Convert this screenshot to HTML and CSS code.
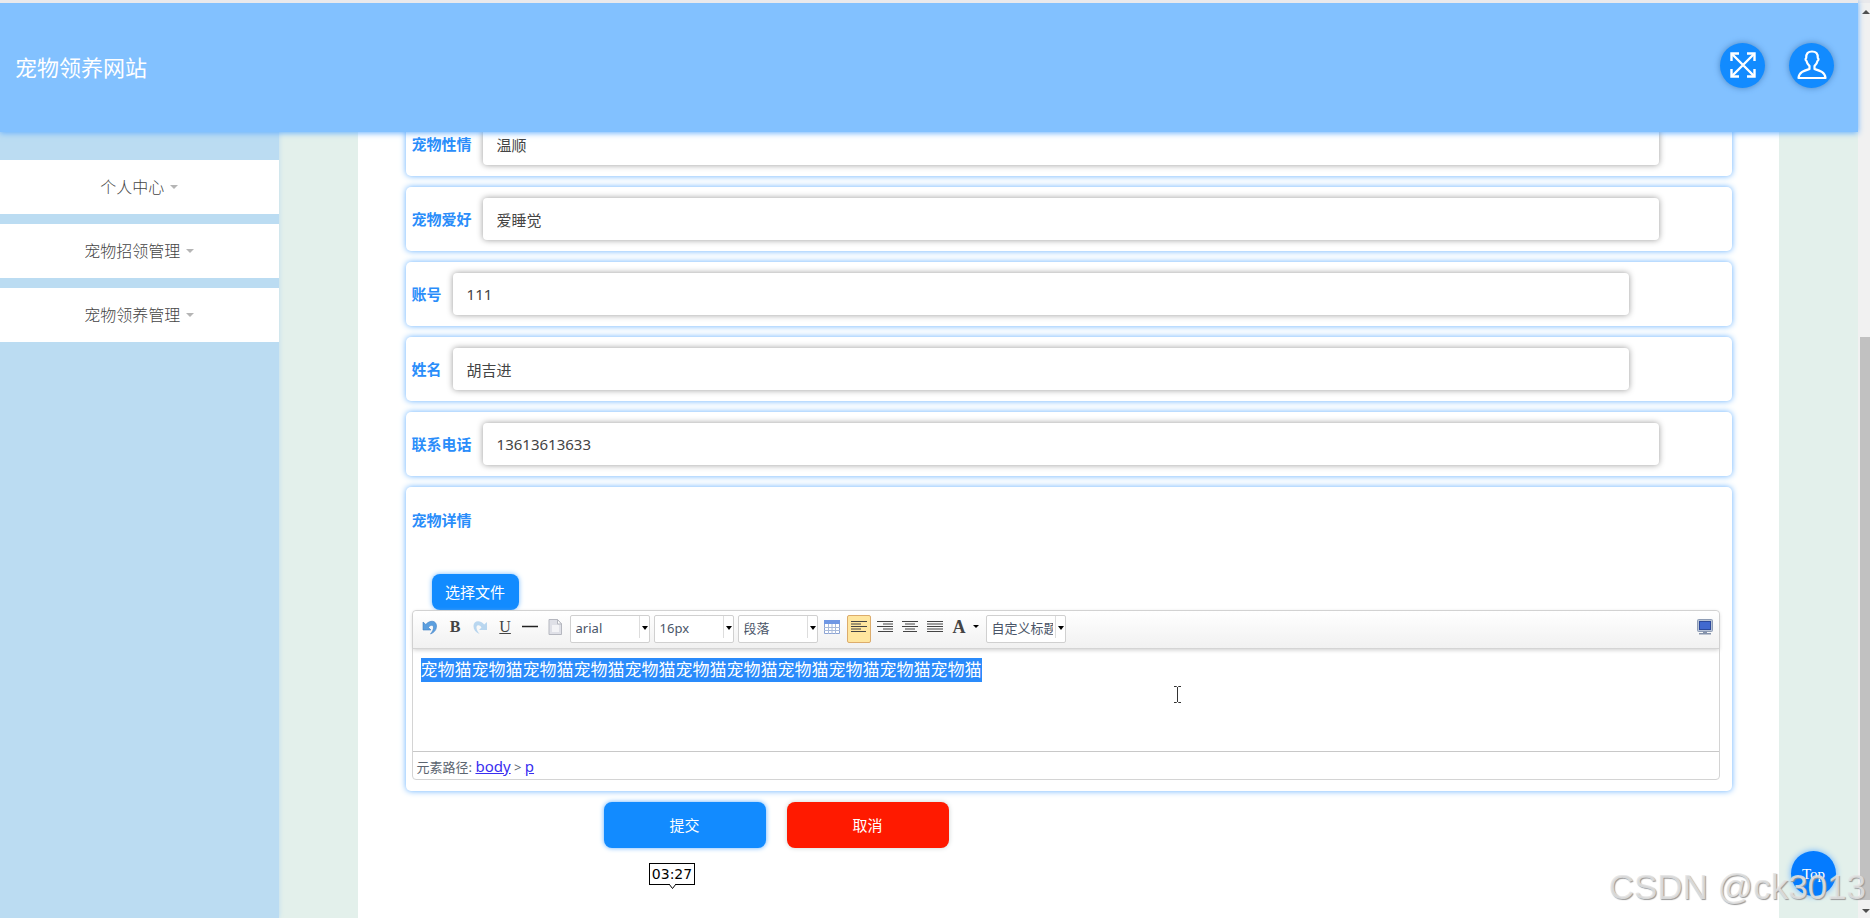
FILE: index.html
```html
<!DOCTYPE html>
<html lang="zh-CN">
<head>
<meta charset="utf-8">
<title>宠物领养网站</title>
<link rel="stylesheet" href="styles.css">
</head>
<body>
<header class="header">
  <h1 class="brand">宠物领养网站</h1>
  <div class="header-actions">
    <button class="round" type="button" aria-label="全屏">
      <svg width="28" height="28" viewBox="0 0 28 28" fill="none" stroke="#fff" stroke-width="2.400"><path d="M3 3l22 22M25 3L3 25"/><path d="M2.500 10V2.500H10M18 2.500h7.500V10M25.500 18v7.500H18M10 25.500H2.500V18"/></svg>
    </button>
    <button class="round" type="button" aria-label="用户">
      <svg width="30" height="30" viewBox="0 0 30 30" fill="none" stroke="#fff" stroke-width="2.200" stroke-linejoin="round"><path d="M12.500 16C10.500 14.500 9.800 12.500 9.500 11C8.300 10.500 8.300 8.500 9.200 8C9 3.500 11 1.500 15 1.500S21 3.500 20.800 8c.9.500.9 2.500-.3 3-.3 1.500-1 3.500-3 5v3c5 1.500 10.500 3 11 9H1.500c.5-6 6-7.500 11-9z"/></svg>
    </button>
  </div>
</header>

<div class="page">
  <nav class="sidebar">
    <button class="menu" type="button">个人中心<span class="caret"></span></button>
    <button class="menu" type="button">宠物招领管理<span class="caret"></span></button>
    <button class="menu" type="button">宠物领养管理<span class="caret"></span></button>
  </nav>
  <main class="main">
    <form class="form">
      <div class="row"><label for="temper">宠物性情</label><input id="temper" type="text" value="温顺"></div>
      <div class="row"><label for="hobby">宠物爱好</label><input id="hobby" type="text" value="爱睡觉"></div>
      <div class="row"><label for="account">账号</label><input id="account" type="text" value="111"></div>
      <div class="row"><label for="name">姓名</label><input id="name" type="text" value="胡吉进"></div>
      <div class="row"><label for="phone">联系电话</label><input id="phone" type="text" value="13613613633"></div>
      <section class="detail">
        <h2 class="detail-title">宠物详情</h2>
        <button class="file" type="button">选择文件</button>
        <div class="editor">
          <div class="toolbar">
            <button class="tool" type="button" aria-label="撤销"><svg width="16" height="16" viewBox="0 0 16 16"><path d="M1 3v8h8L6.500 8.500C8 6 11 5.500 11.500 8c.3 2.500-1.500 5-3 7 4-1.500 6-4.500 6-8C14.500 1.500 8 .5 3.800 5.500z" fill="#5b9fdf" stroke="#3f7fc4" stroke-width=".6"/></svg></button>
            <button class="tool letter" type="button" aria-label="加粗"><b>B</b></button>
            <button class="tool faded" type="button" aria-label="重做"><svg width="16" height="16" viewBox="0 0 16 16"><path d="M15 3v8H7l2.500-2.500C8 6 5 5.500 4.500 8c-.3 2.500 1.500 5 3 7-4-1.500-6-4.500-6-8C1.500 1.500 8 .5 12.200 5.500z" fill="#8fc0ea"/></svg></button>
            <button class="tool letter" type="button" aria-label="下划线"><u>U</u></button>
            <button class="tool" type="button" aria-label="分隔线"><svg width="16" height="16" viewBox="0 0 16 16"><path d="M0 7.500h16" stroke="#222" stroke-width="1.500"/></svg></button>
            <button class="tool" type="button" aria-label="清空文档"><svg width="16" height="16" viewBox="0 0 16 16"><path d="M2 .5h8.500L14.500 5v10.500H2z" fill="#dfe0e7" stroke="#b5b7bf"/><path d="M5 6h7v7H5z" fill="#f3f3f6"/><path d="M10.500.5V5h4z" fill="#fff" stroke="#b5b7bf"/></svg></button>
            <span class="pick"><select aria-label="字体"><option>arial</option></select></span>
            <span class="pick"><select aria-label="字号"><option>16px</option></select></span>
            <span class="pick"><select aria-label="段落格式"><option>段落</option></select></span>
            <button class="tool" type="button" aria-label="表格"><svg width="16" height="16" viewBox="0 0 16 16"><path d="M.5 1.500h15v13H.5z" fill="#fff" stroke="#8ba3d4"/><path d="M0 1h16v4H0z" fill="#6f97e4"/><path d="M0 8.500h16M0 11.500h16M4.500 5v10M8 5v10M11.500 5v10" stroke="#a8bada"/></svg></button>
            <button class="tool active" type="button" aria-label="左对齐"><svg class="lines" width="16" height="16" viewBox="0 0 16 16"><path d="M0 2.500h16M0 5h10M0 7.500h16M0 10h10M0 12.500h15"/></svg></button>
            <button class="tool" type="button" aria-label="右对齐"><svg class="lines" width="16" height="16" viewBox="0 0 16 16"><path d="M0 2.500h16M6 5h10M0 7.500h16M6 10h10M1 12.500h15"/></svg></button>
            <button class="tool" type="button" aria-label="居中"><svg class="lines" width="16" height="16" viewBox="0 0 16 16"><path d="M0 2.500h16M3 5h10M0 7.500h16M3 10h10M1 12.500h14"/></svg></button>
            <button class="tool" type="button" aria-label="两端对齐"><svg class="lines" width="16" height="16" viewBox="0 0 16 16"><path d="M0 2.500h16M0 5h16M0 7.500h16M0 10h16M0 12.500h16"/></svg></button>
            <button class="tool letter color" type="button" aria-label="字体颜色"><b>A</b><span class="arrow"></span></button>
            <span class="pick"><select aria-label="自定义标题"><option>自定义标题</option></select></span>
            <button class="tool screen" type="button" aria-label="编辑器全屏"><svg width="16" height="16" viewBox="0 0 16 16"><rect x=".5" y=".5" width="15" height="12" rx="1" fill="#b9c4d6" stroke="#8e9cb4"/><rect x="2.500" y="2.500" width="11" height="8" fill="#4169cf" stroke="#2c4a9c"/><path d="M6 12.500h4v1.500h4v1.500H2V14h4z" fill="#8492aa"/></svg></button>
          </div>
          <div class="canvas" contenteditable="true"><p><mark>宠物猫宠物猫宠物猫宠物猫宠物猫宠物猫宠物猫宠物猫宠物猫宠物猫宠物猫</mark></p></div>
          <div class="path">元素路径: <a href="#body">body</a> &gt; <a href="#p">p</a></div>
        </div>
      </section>
      <div class="actions">
        <button class="submit" type="submit">提交</button>
        <button class="cancel" type="button">取消</button>
      </div>
    </form>
  </main>
</div>

<div class="scrollbar"><span class="up"></span><span class="thumb"></span><span class="down"></span></div>
<button class="top" type="button">Top</button>
<div class="time">03:27<svg width="7" height="6" viewBox="0 0 7 6"><path d="M0 0l3.500 4.500L7 0" fill="#fff" stroke="#000"/></svg></div>
<svg class="ibeam" width="9" height="17" viewBox="0 0 9 17" fill="none" stroke="#333"><path d="M1 .5h2.500l1 1 1-1H8M4.500 1v15M1 16.500h2.500l1-1 1 1H8"/></svg>
<div class="watermark">CSDN @ck3013</div>
</body>
</html>
```
FILE: styles.css
```css
* { box-sizing: border-box; }

body {
  margin: 0;
  height: 100vh;
  overflow: hidden;
  position: relative;
  font: 15px/20px "Noto Sans", "Noto Sans CJK SC", sans-serif;
  color: #444;
  background: #fff;
}

button, input, select { font: inherit; color: inherit; }
button { border: 0; padding: 0; background: none; cursor: pointer; }

.header {
  position: absolute;
  inset: 0 12px auto 0;
  z-index: 2;
  height: 132px;
  padding: 0 24px 0 15px;
  display: flex;
  align-items: center;
  justify-content: space-between;
  background: #82c1ff;
  border-top: 3px solid #e9e9ec;
  box-shadow: 0 1px 6px #64afff;
}
.brand { margin: 0; padding-bottom: 2px; font-size: 22px; line-height: 30px; font-weight: 400; color: #fff; }
.header-actions { display: flex; gap: 24px; padding-bottom: 5px; }
.round {
  width: 45px;
  height: 45px;
  border-radius: 50%;
  display: grid;
  place-items: center;
  background: #128bff;
  box-shadow: 0 0 6px #4a86c4;
}

.page { display: flex; min-height: 100%; margin-right: 12px; background: #e3f0eb; }

.sidebar {
  width: 15%;
  flex: none;
  padding-top: 160px;
  display: flex;
  flex-direction: column;
  gap: 10px;
  background: #bbdcf2;
  box-shadow: 0 0 5px #bbdcf2;
}
.menu {
  height: 54px;
  display: flex;
  align-items: center;
  justify-content: center;
  gap: 6px;
  font-size: 16px;
  font-weight: 300;
  background: #fff;
}
.caret { border: 4px solid transparent; border-top-color: #b5b5b5; border-bottom: 0; }

.main { flex: 1; padding: 0 5%; display: flex; }
.form {
  flex: 1;
  margin: 0 -14px;
  padding: 112px 47px 0 48px;
  display: flex;
  flex-direction: column;
  gap: 11px;
  background: #fff;
}

.row, .detail { border-radius: 5px; background: #fff; box-shadow: 0 0 6px #64b0ff; }
.row { height: 64px; padding: 0 6px; display: flex; align-items: center; gap: 11px; }
.row label, .detail-title { font-size: 15px; line-height: 20px; font-weight: 700; color: #2a8dfa; }
.row input {
  flex: none;
  width: 89.5%;
  height: 42px;
  padding: 0 14px;
  border: 0;
  border-radius: 4px;
  background: #fff;
  outline: 0;
  box-shadow: 0 0 6px #999;
}

.detail { padding: 23px 12px 11px 6px; }
.detail-title { margin: 0 0 44px; }
.file {
  display: block;
  margin-left: 20px;
  width: 87px;
  height: 36px;
  border-radius: 8px;
  background: #128bff;
  color: #fff;
  box-shadow: 0 0 5px #79bcff;
}

.editor { position: relative; border: 1px solid #d4d4d4; border-radius: 4px; background: #fff; }
.toolbar {
  height: 38px;
  padding: 4px 4px 0 7px;
  display: flex;
  gap: 4px;
  border-bottom: 1px solid #d4d4d4;
  border-radius: 4px 4px 0 0;
  background: linear-gradient(#fff, #f1f1f1);
  box-shadow: 0 1px 4px #ccc;
}
.tool { width: 21px; height: 28px; padding-bottom: 5px; flex: none; display: flex; align-items: center; justify-content: center; }
.letter { font: 16px/20px "Liberation Serif", serif; color: #444; }
.faded { opacity: .6; }
.active { width: 24px; border: 1px solid #dcac6c; border-radius: 2px; background: #ffe69f; }
.lines { stroke: #444; fill: none; stroke-width: 1; }
.color { width: 32px; gap: 7px; font-size: 18px; }
.arrow { border: 3px solid transparent; border-top-color: #000; border-bottom: 0; }
.screen { margin-left: auto; }
.pick { position: relative; width: 80px; height: 28px; border: 1px solid #d0d0d0; border-radius: 2px; background: #fff; display: flex; }
.pick::before { content: ""; position: absolute; right: 9px; top: 0; height: 22px; border-left: 1px solid #ddd; }
.pick::after { content: ""; position: absolute; right: 1px; top: 10px; border: 3px solid transparent; border-top: 4px solid #000; border-bottom: 0; }
.pick select {
  appearance: none;
  width: 66px;
  height: 24px;
  padding: 0 0 0 5px;
  border: 0;
  background: none;
  font-size: 13px;
  line-height: 20px;
  color: #4a5568;
}

.canvas { height: 102px; padding: 9px 8px; outline: 0; font-size: 17px; line-height: 24px; }
.canvas p { margin: 0; }
.canvas mark { display: inline-block; background: #2a8bfb; color: #fff; }
.path { height: 28px; padding: 3px 4px; border-top: 1px solid #c8c8c8; font-size: 13px; line-height: 22px; color: #5c6570; }
.path a { font-size: 15px; color: #3a2ff0; }

.actions { display: flex; gap: 21px; padding-left: 198px; }
.actions button { width: 162px; height: 46px; border-radius: 8px; color: #fff; }
.submit { background: #128bff; box-shadow: 0 0 5px #64b0ff; }
.cancel { background: #ff1a00; box-shadow: 0 0 5px #ccd4d4; }

.scrollbar {
  position: absolute;
  inset: 0 0 0 auto;
  width: 12px;
  padding: 7px 0 5px 2px;
  display: flex;
  flex-direction: column;
  justify-content: space-between;
  background: #f1f1f1;
  border-top: 3px solid #e9e9ec;
}
.thumb { position: absolute; inset: 334px 0 18px 2px; background: #c1c1c1; }
.up, .down { margin-left: 2px; width: 8px; border: 4px solid transparent; }
.up { border-top: 0; border-bottom-color: #505050; }
.down { border-bottom: 0; border-top-color: #505050; }

.top {
  position: absolute;
  right: 34px;
  bottom: 22px;
  width: 45px;
  height: 45px;
  border-radius: 50%;
  background: #047bff;
  color: #fff;
  font: 15px/20px "Liberation Serif", serif;
  box-shadow: 0 0 6px #64afff;
}
.time {
  position: absolute;
  left: 649px;
  top: 863px;
  width: 46px;
  height: 22px;
  border: 1px solid #000;
  background: #fff;
  color: #000;
  font: 14px/20px "DejaVu Sans", sans-serif;
  text-align: center;
}
.time svg { position: absolute; left: 19px; top: 20px; }
.ibeam { position: absolute; left: 1173px; top: 686px; }
.watermark {
  position: absolute;
  right: 4px;
  bottom: 11px;
  font: 35px/40px "Liberation Sans", sans-serif;
  color: rgba(228, 228, 228, .85);
  text-shadow: 1px 1px 1px #999;
  pointer-events: none;
}
```
